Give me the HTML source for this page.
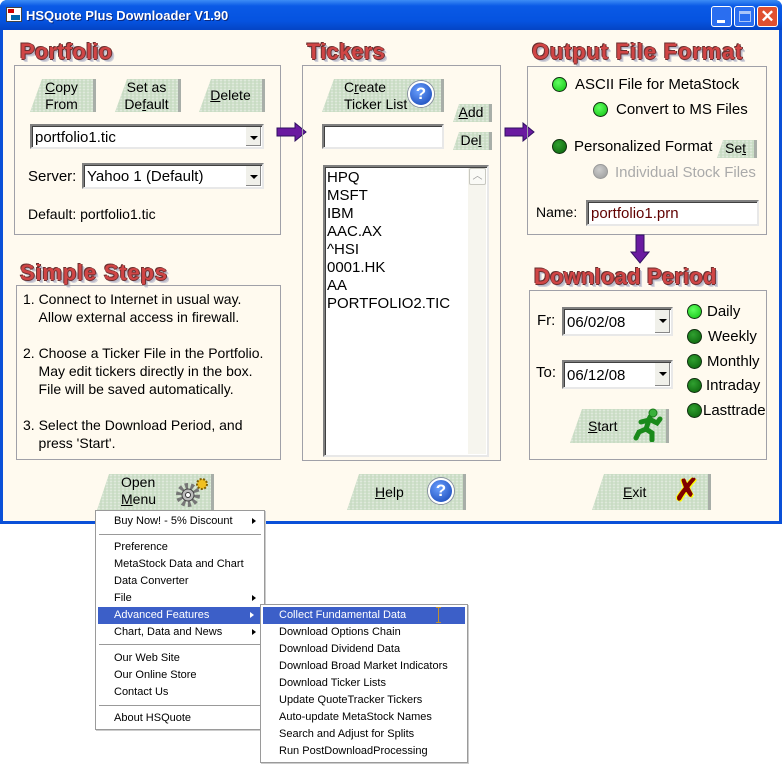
<!DOCTYPE html>
<html><head><meta charset="utf-8"><style>
*{margin:0;padding:0;box-sizing:border-box}
body{width:783px;height:767px;background:#fff;position:relative;overflow:hidden;font-family:"Liberation Sans",Arial,sans-serif;font-size:14px;color:#000}
.a{position:absolute}
.win{left:0;top:0;width:782px;height:524px;background:#0a50d8;border-radius:7px 7px 0 0}
.title{left:0;top:0;width:782px;height:30px;border-radius:7px 7px 0 0;background:linear-gradient(#3d8df5,#0a5ae6 20%,#0553e0 70%,#0444c4)}
.ttext{left:26px;top:8px;color:#fff;font-weight:bold;font-size:13px;text-shadow:1px 1px #0a2a80}
.body{left:3px;top:30px;width:776px;height:491px;background:#fffaef}
.h{font-weight:bold;font-size:22px;color:#d04545;text-shadow:-1px -1px 0 #6a3030,1px 0 0 #6a3030,0 1px 0 #6a3030,2px 2px 0 #b8b8c8,3px 3px 0 #d0d0d8;letter-spacing:.2px}
.box{border:1px solid #a0a0a8}
.btn{background:#c9dcc4;background-image:radial-gradient(#dfe9dc 1px,transparent 1.5px);background-size:4px 3px;clip-path:polygon(12px 0,100% 0,100% 100%,0 100%);border-right:3px solid #a8aea8;text-align:center;line-height:17px;font-size:14px}
.combo{background:#fff;border:2px solid;border-color:#808080 #e8e8e8 #e8e8e8 #808080;box-shadow:inset 1px 1px #404040}
.combo span{position:absolute;left:3px;top:3px;font-size:15px}
.dd{position:absolute;right:1px;top:1px;bottom:1px;width:16px;background:#f0f0ea;border-left:1px solid #fff;box-shadow:inset -1px -1px #888}
.dd:after{content:"";position:absolute;left:4px;top:9px;border:4px solid transparent;border-top:4px solid #000;border-bottom:0}
.rad{width:15px;height:15px;border-radius:50%;border:1.5px solid #103010;background:radial-gradient(circle at 40% 35%,#60ff60,#10c010)}
.rd{background:radial-gradient(circle at 40% 35%,#30a030,#0a600a)}
.rg{border-color:#999;background:radial-gradient(circle at 40% 35%,#ccc,#999)}
.t15{font-size:15px}
.menu{background:#fff;border:1px solid #9a9a9a;font-size:11px;box-shadow:1px 1px #ccc}
.mi{position:absolute;left:0;right:0;height:17px;line-height:17px;padding-left:18px}
.sel{background:#3c5fc8;color:#fff;margin:0 2px}
.sep{position:absolute;left:3px;right:3px;border-top:1px solid #999}
.arr:after{content:"";position:absolute;right:8px;top:5px;border:3.5px solid transparent;border-left:4px solid #000;border-right:0}
.sel.arr:after{border-left-color:#fff}
.q{width:26px;height:26px;border-radius:50%;background:radial-gradient(circle at 40% 35%,#6aa0ff,#1040b0);border:2px solid #fff;box-shadow:0 0 0 1px #8890a0;color:#fff;font-weight:bold;font-size:17px;line-height:22px;text-align:center}
</style></head><body>
<div class="a win"></div>
<div class="a title"></div>
<div class="a" style="left:6px;top:7px;width:16px;height:15px;background:#fff;border:1px solid #444"><div style="position:absolute;left:1px;top:1px;width:6px;height:4px;background:#c00"></div><div style="position:absolute;left:4px;top:7px;width:9px;height:5px;background:#06a"></div></div>
<div class="a ttext">HSQuote Plus Downloader V1.90</div>
<div class="a" style="left:711px;top:6px;width:21px;height:21px;border:1px solid #fff;border-radius:3px;background:#2a6ef0"><div style="position:absolute;left:5px;top:13px;width:8px;height:3px;background:#fff"></div></div>
<div class="a" style="left:734px;top:6px;width:21px;height:21px;border:1px solid #fff;border-radius:3px;background:#2a6ef0"><div style="position:absolute;left:4px;top:4px;width:12px;height:11px;border:1px solid #fff;border-top-width:3px;opacity:.6"></div></div>
<div class="a" style="left:757px;top:6px;width:21px;height:21px;border:1px solid #fff;border-radius:3px;background:#e05030;color:#fff;font-weight:bold;font-size:17px;text-align:center;line-height:19px">✕</div>
<div class="a body"></div>

<!-- Portfolio -->
<div class="a h" style="left:20px;top:39px">Portfolio</div>
<div class="a box" style="left:14px;top:65px;width:267px;height:170px"></div>
<div class="a btn" style="left:30px;top:79px;width:66px;height:33px"><u>C</u>opy<br>From</div>
<div class="a btn" style="left:115px;top:79px;width:66px;height:33px">Set as<br>De<u>f</u>ault</div>
<div class="a btn" style="left:199px;top:79px;width:66px;height:33px;line-height:33px"><u>D</u>elete</div>
<div class="a combo" style="left:30px;top:124px;width:234px;height:25px"><span>portfolio1.tic</span><div class="dd"></div></div>
<div class="a t15" style="left:28px;top:168px">Server:</div>
<div class="a combo" style="left:82px;top:163px;width:182px;height:26px"><span>Yahoo 1 (Default)</span><div class="dd"></div></div>
<div class="a" style="left:28px;top:206px">Default: portfolio1.tic</div>

<svg class="a" style="left:276px;top:122px" width="32" height="20"><path d="M1 6h18V1l11 9-11 9v-5H1z" fill="#6a1aa0" stroke="#301060"/></svg>

<!-- Tickers -->
<div class="a h" style="left:307px;top:39px">Tickers</div>
<div class="a box" style="left:302px;top:65px;width:199px;height:396px"></div>
<div class="a btn" style="left:322px;top:79px;width:122px;height:33px;text-align:left;padding-left:22px">C<u>r</u>eate<br>Ticker List</div>
<div class="a q" style="left:408px;top:81px">?</div>
<div class="a btn" style="left:453px;top:104px;width:39px;height:18px;clip-path:polygon(6px 0,100% 0,100% 100%,0 100%)"><u>A</u>dd</div>
<div class="a btn" style="left:453px;top:132px;width:39px;height:18px;clip-path:polygon(6px 0,100% 0,100% 100%,0 100%)">De<u>l</u></div>
<div class="a combo" style="left:322px;top:124px;width:122px;height:25px"></div>
<div class="a combo" style="left:323px;top:165px;width:166px;height:292px"></div>
<div class="a" style="left:468px;top:168px;width:18px;height:286px;background:#f6f5ee"></div>
<div class="a" style="left:469px;top:168px;width:17px;height:17px;border:1px solid #c8c8c0;border-radius:2px;background:#fafaf6;color:#999;font-size:10px;text-align:center;line-height:15px">︿</div>
<div class="a t15" style="left:327px;top:169px;line-height:18px">HPQ<br>MSFT<br>IBM<br>AAC.AX<br>^HSI<br>0001.HK<br>AA<br>PORTFOLIO2.TIC</div>

<svg class="a" style="left:504px;top:122px" width="32" height="20"><path d="M1 6h18V1l11 9-11 9v-5H1z" fill="#6a1aa0" stroke="#301060"/></svg>

<!-- Output -->
<div class="a h" style="left:532px;top:39px;letter-spacing:.8px">Output File Format</div>
<div class="a box" style="left:527px;top:66px;width:240px;height:169px"></div>
<div class="a rad" style="left:552px;top:77px"></div>
<div class="a t15" style="left:575px;top:76px">ASCII File for MetaStock</div>
<div class="a rad" style="left:593px;top:102px"></div>
<div class="a t15" style="left:616px;top:101px">Convert to MS Files</div>
<div class="a rad rd" style="left:552px;top:139px"></div>
<div class="a t15" style="left:574px;top:138px">Personalized Format</div>
<div class="a btn" style="left:717px;top:140px;width:40px;height:18px;clip-path:polygon(6px 0,100% 0,100% 100%,0 100%)">Se<u>t</u></div>
<div class="a rad rg" style="left:593px;top:164px"></div>
<div class="a t15" style="left:615px;top:164px;color:#aaa">Individual Stock Files</div>
<div class="a" style="left:536px;top:204px">Name:</div>
<div class="a combo" style="left:586px;top:200px;width:173px;height:26px"><span style="color:#600000">portfolio1.prn</span></div>
<svg class="a" style="left:630px;top:234px" width="20" height="30"><path d="M6 1h8v17h5l-9 11-9-11h5z" fill="#6a1aa0" stroke="#301060"/></svg>

<!-- Download Period -->
<div class="a h" style="left:534px;top:264px">Download Period</div>
<div class="a box" style="left:529px;top:290px;width:238px;height:170px"></div>
<div class="a t15" style="left:537px;top:312px">Fr:</div>
<div class="a combo" style="left:562px;top:307px;width:111px;height:29px"><span style="top:5px">06/02/08</span><div class="dd"></div></div>
<div class="a t15" style="left:536px;top:364px">To:</div>
<div class="a combo" style="left:562px;top:360px;width:111px;height:29px"><span style="top:5px">06/12/08</span><div class="dd"></div></div>
<div class="a rad" style="left:687px;top:304px"></div><div class="a t15" style="left:707px;top:303px">Daily</div>
<div class="a rad rd" style="left:687px;top:329px"></div><div class="a t15" style="left:708px;top:328px">Weekly</div>
<div class="a rad rd" style="left:687px;top:354px"></div><div class="a t15" style="left:707px;top:353px">Monthly</div>
<div class="a rad rd" style="left:687px;top:378px"></div><div class="a t15" style="left:706px;top:377px">Intraday</div>
<div class="a rad rd" style="left:687px;top:403px"></div><div class="a t15" style="left:703px;top:402px">Lasttrade</div>
<div class="a btn" style="left:570px;top:409px;width:99px;height:34px;line-height:34px;text-align:left;padding-left:18px"><u>S</u>tart</div>
<svg class="a" style="left:630px;top:408px" width="36" height="34"><g stroke="#1a8a1a" stroke-width="5" stroke-linecap="round" fill="none"><path d="M20 9l-4 12"/><path d="M16 21l-7 3-3 6"/><path d="M16 21l6 4 0 7"/><path d="M19 12l-8 2"/><path d="M19 11l8 4 3-4"/></g><circle cx="23" cy="5" r="4" fill="#3ab03a" stroke="#1a7a1a"/></svg>

<!-- Simple steps -->
<div class="a h" style="left:20px;top:260px;letter-spacing:.8px">Simple Steps</div>
<div class="a box" style="left:16px;top:285px;width:265px;height:175px"></div>
<div class="a" style="left:23px;top:290px;line-height:18px;font-size:14px">
1. Connect to Internet in usual way.<br>&nbsp;&nbsp;&nbsp;&nbsp;Allow external access in firewall.<br><br>
2. Choose a Ticker File in the Portfolio.<br>&nbsp;&nbsp;&nbsp;&nbsp;May edit tickers directly in the box.<br>&nbsp;&nbsp;&nbsp;&nbsp;File will be saved automatically.<br><br>
3. Select the Download Period, and<br>&nbsp;&nbsp;&nbsp;&nbsp;press 'Start'.</div>

<!-- bottom buttons -->
<div class="a btn" style="left:97px;top:474px;width:117px;height:36px;text-align:left;padding-left:24px;line-height:17px">Open<br><u>M</u>enu</div>
<svg class="a" style="left:174px;top:476px" width="36" height="32"><circle cx="14" cy="19" r="9" fill="none" stroke="#777" stroke-width="6" stroke-dasharray="3 2.6"/><circle cx="14" cy="19" r="6" fill="#bbb" stroke="#444"/><circle cx="14" cy="19" r="2.5" fill="#fff" stroke="#333"/><circle cx="28" cy="8" r="5" fill="#f0c020" stroke="#806000" stroke-width="2" stroke-dasharray="2 1.5"/></svg>
<div class="a btn" style="left:347px;top:474px;width:119px;height:36px;line-height:36px;text-align:left;padding-left:28px"><u>H</u>elp</div>
<div class="a q" style="left:428px;top:478px">?</div>
<div class="a btn" style="left:592px;top:474px;width:119px;height:36px;line-height:36px;text-align:left;padding-left:31px"><u>E</u>xit</div>
<div class="a" style="left:674px;top:474px;color:#800000;font-size:30px;font-weight:bold;line-height:34px;text-shadow:1px 1px #ff0,-1px 0 #ff0">✗</div>

<!-- menu -->
<div class="a menu" style="left:95px;top:510px;width:170px;height:220px">
<div class="mi arr" style="top:2px">Buy Now! - 5% Discount</div>
<div class="sep" style="top:23px"></div>
<div class="mi" style="top:28px">Preference</div>
<div class="mi" style="top:45px">MetaStock Data and Chart</div>
<div class="mi" style="top:62px">Data Converter</div>
<div class="mi arr" style="top:79px">File</div>
<div class="mi sel arr" style="top:96px;padding-left:16px">Advanced Features</div>
<div class="mi arr" style="top:113px">Chart, Data and News</div>
<div class="sep" style="top:133px"></div>
<div class="mi" style="top:139px">Our Web Site</div>
<div class="mi" style="top:156px">Our Online Store</div>
<div class="mi" style="top:173px">Contact Us</div>
<div class="sep" style="top:194px"></div>
<div class="mi" style="top:199px">About HSQuote</div>
</div>
<div class="a menu" style="left:260px;top:604px;width:208px;height:159px">
<div class="mi sel" style="top:2px;padding-left:16px">Collect Fundamental Data</div>
<div class="mi" style="top:19px">Download Options Chain</div>
<div class="mi" style="top:36px">Download Dividend Data</div>
<div class="mi" style="top:53px">Download Broad Market Indicators</div>
<div class="mi" style="top:70px">Download Ticker Lists</div>
<div class="mi" style="top:87px">Update QuoteTracker Tickers</div>
<div class="mi" style="top:104px">Auto-update MetaStock Names</div>
<div class="mi" style="top:121px">Search and Adjust for Splits</div>
<div class="mi" style="top:138px">Run PostDownloadProcessing</div>
</div>
<div class="a" style="left:436px;top:607px;width:5px;height:16px;border:1px solid #c09030;border-width:1px 0;"><div style="position:absolute;left:2px;top:0;width:1px;height:14px;background:#c09030"></div></div>
</body></html>
